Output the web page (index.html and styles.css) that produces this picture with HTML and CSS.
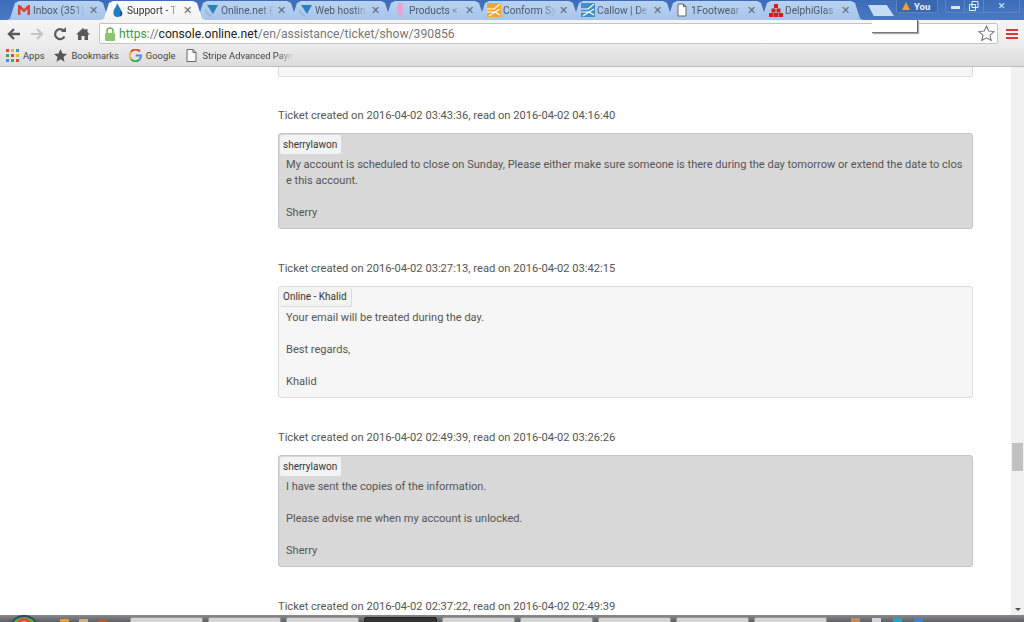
FILE: index.html
```html
<!DOCTYPE html>
<html lang="en">
  <head>
    <meta charset="UTF-8" />
    <title>Support - Ticket</title>
    <link rel="stylesheet" href="styles.css">
  </head>
  <body>
    <div class="tabstrip">
      <div class="tabs">
        <div class="tab">
          <svg class="fav" viewBox="0 0 14 14"><path d="M1 2h2l4 4 4-4h2v10h-2.500V6L7 9.500 3.500 6v6H1z" fill="#d9423a"/></svg>
          <span class="title">Inbox (351)</span><span class="close">✕</span>
        </div>
        <div class="tab active">
          <svg class="fav" viewBox="0 0 14 14"><path d="M6 0C8 4 11 7 10.500 10.500 10 13 8 14 6.500 14 3.500 14 2 11.500 2.500 8.500 3 5.500 5.500 4 6 0z" fill="#1b7fc4"/><path d="M9 7c2 1 3 3 2 5-.5 1-1.500 1.500-2.500 1.500C10 11 10 9 9 7z" fill="#0d4f86"/></svg>
          <span class="title">Support - T</span><span class="close">✕</span>
        </div>
        <div class="tab">
          <svg class="fav" viewBox="0 0 14 14"><path d="M2 2h11L8 11z" fill="#2d7fc0"/><path d="M0 6c1 4 3 6 6 7" fill="none" stroke="#8fb4d8" stroke-width="1.500"/></svg>
          <span class="title">Online.net F</span><span class="close">✕</span>
        </div>
        <div class="tab">
          <svg class="fav" viewBox="0 0 14 14"><path d="M2 2h11L8 11z" fill="#2d7fc0"/><path d="M0 6c1 4 3 6 6 7" fill="none" stroke="#8fb4d8" stroke-width="1.500"/></svg>
          <span class="title">Web hostin</span><span class="close">✕</span>
        </div>
        <div class="tab">
          <svg class="fav" viewBox="0 0 14 14"><path d="M5 0h4l1 6-2 8H6L4 6z" fill="#ee9fd2"/></svg>
          <span class="title">Products &lt;</span><span class="close">✕</span>
        </div>
        <div class="tab">
          <svg class="fav" viewBox="0 0 14 14"><rect width="14" height="14" fill="#f2a62e"/><path d="M0 6h7l6-5M0 9h8l5-3M2 13l6-4 5 3" fill="none" stroke="#fff" stroke-width="1.200"/></svg>
          <span class="title">Conform Sy</span><span class="close">✕</span>
        </div>
        <div class="tab">
          <svg class="fav" viewBox="0 0 14 14"><rect width="14" height="14" fill="#3f8fc6"/><path d="M0 6h7l6-5M0 9h8l5-3M2 13l6-4 5 3" fill="none" stroke="#fff" stroke-width="1.200"/></svg>
          <span class="title">Callow | De</span><span class="close">✕</span>
        </div>
        <div class="tab">
          <svg class="fav" viewBox="0 0 14 14"><path d="M3 1h5.500L11 3.500V13H3zM8.500 1v2.500H11" fill="#fdfdfd" stroke="#666"/></svg>
          <span class="title">1Footwear</span><span class="close">✕</span>
        </div>
        <div class="tab">
          <svg class="fav" viewBox="0 0 14 14"><path d="M5 1h4v4H5zM2.500 5.500h4v4h-4zM7.500 5.500h4v4h-4zM0 10h4.500v4H0zM5 10h4v4H5zM9.500 10H14v4H9.500z" fill="#dc1c1c"/></svg>
          <span class="title">DelphiGlas</span><span class="close">✕</span>
        </div>
        <div class="newtab"></div>
      </div>
      <div class="wincontrols">
        <div class="you"><span class="warn"></span>You</div>
        <div class="winbtns">
          <div class="winbtn"><span class="minbar"></span></div>
          <div class="winbtn"><svg width="10" height="10" viewBox="0 0 10 10"><path d="M3 .5h6v6H3zM.5 3.500h6v6h-6z" fill="none" stroke="#e8effa"/></svg></div>
          <div class="winbtn winclose">✕</div>
        </div>
      </div>
    </div>

    <div class="toolbar">
      <svg class="navicon" viewBox="0 0 14 14"><path d="M7 2 2 7l5 5M2 7h11" fill="none" stroke="#5a5a5a" stroke-width="2.400"/></svg>
      <svg class="navicon" viewBox="0 0 14 14"><path d="m7 2 5 5-5 5M12 7H1" fill="none" stroke="#c4c4c4" stroke-width="2.200"/></svg>
      <svg class="navicon" viewBox="0 0 14 14"><path d="M11.500 9.500A5 5 0 1 1 11 4" fill="none" stroke="#5a5a5a" stroke-width="2.200"/><path d="M8 5h5V0z" fill="#5a5a5a"/></svg>
      <svg class="navicon" viewBox="0 0 14 14"><path d="M7 1 0 7.500h2V13h3.500V9h3v4H12V7.500h2L11.500 5V2h-2v1.200z" fill="#5a5a5a"/></svg>
      <div class="omnibox">
        <svg class="lock" viewBox="0 0 12 14"><path d="M3 6V4a3 3 0 0 1 6 0v2" fill="none" stroke="#6fae52" stroke-width="1.500"/><rect x="1" y="6" width="10" height="8" rx="1" fill="#8cc56c"/></svg>
        <span class="url"><span class="scheme">https</span><span class="faint">://</span>console.online.net<span class="faint">/en/assistance/ticket/show/390856</span></span>
        <svg class="star" viewBox="0 0 16 16"><path d="m8 1 2.100 4.700 5 .5-3.800 3.400 1.100 5L8 12l-4.400 2.600 1.100-5L.9 6.200l5-.5z" fill="#fff" stroke="#777"/></svg>
      </div>
      <div class="menubtn"><span></span><span></span><span></span></div>
      <div class="tooltip"></div>
    </div>

    <div class="bookmarks">
      <div class="bookmark">
        <svg class="bmicon" viewBox="0 0 13 13"><path d="M0 0h3v3H0z" fill="#e0483c"/><path d="M5 0h3v3H5z" fill="#f2b233"/><path d="M10 0h3v3h-3z" fill="#4a8af0"/><path d="M0 5h3v3H0z" fill="#3fa85a"/><path d="M5 5h3v3H5z" fill="#e0483c"/><path d="M10 5h3v3h-3z" fill="#f2b233"/><path d="M0 10h3v3H0z" fill="#4a8af0"/><path d="M5 10h3v3H5z" fill="#3fa85a"/><path d="M10 10h3v3h-3z" fill="#e0483c"/></svg>
        Apps
      </div>
      <div class="bookmark">
        <svg class="bmicon" viewBox="0 0 13 13"><path d="m6.500 0 1.900 4.400 4.600.5-3.500 3.100 1 4.700-4-2.400-4 2.400 1-4.700L0 4.900l4.600-.5z" fill="#555"/></svg>
        Bookmarks
      </div>
      <div class="bookmark">
        <svg class="bmicon" viewBox="0 0 13 13"><path d="M11 2.500A5.500 5.500 0 0 0 2 3" fill="none" stroke="#e0483c" stroke-width="2"/><path d="M2 3a5.500 5.500 0 0 0 0 7" fill="none" stroke="#f2b233" stroke-width="2"/><path d="M2 10a5.500 5.500 0 0 0 8.500.5" fill="none" stroke="#3fa85a" stroke-width="2"/><path d="M10.500 10.500c1-1 1.500-2.200 1.500-4H6.700" fill="none" stroke="#4a8af0" stroke-width="2"/></svg>
        Google
      </div>
      <div class="bookmark">
        <svg class="bmicon" viewBox="0 0 13 13"><path d="M2 .5h6L11 3.500v9H2zM8 .5v3h3" fill="#f8f8f8" stroke="#666"/></svg>
        <span class="bmfade">Stripe Advanced Payn</span>
      </div>
    </div>

    <div class="page">
      <div class="main">
        <div class="msg msg-staff msg-cut"></div>

        <p class="meta">Ticket created on 2016-04-02 03:43:36, read on 2016-04-02 04:16:40</p>
        <div class="msg msg-user">
          <div class="author">sherrylawon</div>
          <p class="body">My account is scheduled to close on Sunday, Please either make sure someone is there during the day tomorrow or extend the date to close this account.

Sherry</p>
        </div>

        <p class="meta">Ticket created on 2016-04-02 03:27:13, read on 2016-04-02 03:42:15</p>
        <div class="msg msg-staff">
          <div class="author">Online - Khalid</div>
          <p class="body">Your email will be treated during the day.

Best regards,

Khalid</p>
        </div>

        <p class="meta">Ticket created on 2016-04-02 02:49:39, read on 2016-04-02 03:26:26</p>
        <div class="msg msg-user">
          <div class="author">sherrylawon</div>
          <p class="body">I have sent the copies of the information.

Please advise me when my account is unlocked.

Sherry</p>
        </div>

        <p class="meta">Ticket created on 2016-04-02 02:37:22, read on 2016-04-02 02:49:39</p>
      </div>
      <div class="scrollbar">
        <div class="thumb"></div>
        <div class="arrow"></div>
      </div>
    </div>

    <div class="taskbar">
      <div class="orb"></div>
      <div class="quick">
        <span class="q1"></span><span class="q2"></span><span class="q3"></span>
      </div>
      <div class="taskbtns">
        <div class="taskbtn"></div>
        <div class="taskbtn"></div>
        <div class="taskbtn"></div>
        <div class="taskbtn taskbtn-on"></div>
        <div class="taskbtn"></div>
        <div class="taskbtn"></div>
        <div class="taskbtn"></div>
        <div class="taskbtn"></div>
        <div class="taskbtn"></div>
      </div>
      <div class="tray">
        <span class="t1"></span><span class="t2"></span><span class="t3"></span><span class="t4"></span>
      </div>
    </div>
  </body>
</html>
```

FILE: styles.css
```css
* {
  box-sizing: border-box;
}
html,
body {
  height: 100%;
}
body {
  margin: 0;
  display: flex;
  flex-direction: column;
  height: 100vh;
  overflow: hidden;
  background: #fff;
  font-family: Roboto, sans-serif;
}

/* browser tab strip */
.tabstrip {
  height: 20px;
  flex: none;
  display: flex;
  background: linear-gradient(#3d6db8, #4a79c4);
}
.tabs {
  display: flex;
  align-items: flex-end;
  padding-left: 7px;
  flex: none;
}
.tab {
  width: 104px;
  height: 19px;
  margin-right: -10px;
  padding: 0 0 1px 10px;
  display: flex;
  align-items: center;
  background: linear-gradient(#b9d2f0, #a6c5ea);
  color: #4e5a68;
  font-size: 10.200px;
  clip-path: polygon(0 100%, 3px 92%, 8px 10%, 12px 0, calc(100% - 12px) 0, calc(100% - 8px) 10%, calc(100% - 3px) 92%, 100% 100%);
}
.tab.active {
  background: linear-gradient(#fbfbfb, #f3f3f3);
  color: #333;
  position: relative;
  z-index: 1;
}
.fav {
  width: 14px;
  height: 14px;
  flex: none;
}
.title {
  width: 53px;
  margin-left: 2px;
  white-space: nowrap;
  overflow: hidden;
  -webkit-mask-image: linear-gradient(to right, #000 75%, transparent);
  mask-image: linear-gradient(to right, #000 75%, transparent);
}
.close {
  margin-left: 3px;
  font-size: 11px;
  font-weight: 700;
  color: #5f6b78;
  font-family: "DejaVu Sans", sans-serif;
}
.newtab {
  width: 26px;
  height: 11px;
  margin: 0 0 4px 15px;
  background: #c6dbf5;
  clip-path: polygon(0 0, 72% 0, 100% 100%, 22% 100%);
}
.wincontrols {
  margin-left: auto;
  padding-right: 4px;
  display: flex;
  align-items: flex-start;
  gap: 7px;
}
.you {
  width: 42px;
  height: 13px;
  padding-left: 5px;
  display: flex;
  align-items: center;
  gap: 4px;
  color: #eaf1fb;
  font-size: 9.500px;
  font-weight: 700;
  background: #3a66ae;
  border: 1px solid #5b84c6;
  border-top: 0;
  border-radius: 0 0 2px 2px;
}
.warn {
  width: 0;
  height: 0;
  border-left: 4px solid transparent;
  border-right: 4px solid transparent;
  border-bottom: 8px solid #eda32c;
}
.winbtns {
  display: flex;
  height: 13px;
  border: 1px solid #5b84c6;
  border-top: 0;
  border-radius: 0 0 2px 2px;
}
.winbtn {
  width: 19px;
  display: flex;
  align-items: center;
  justify-content: center;
  border-right: 1px solid #5b84c6;
  color: #e8effa;
  font-size: 9px;
  font-family: "DejaVu Sans", sans-serif;
}
.winclose {
  width: 35px;
  border-right: 0;
}
.minbar {
  width: 9px;
  height: 3px;
  margin-top: 3px;
  background: #dbe6f6;
}

/* toolbar with the address field */
.toolbar {
  height: 25px;
  flex: none;
  padding: 3px 0 1px 7px;
  display: flex;
  align-items: center;
  background: linear-gradient(#f5f5f5, #ececec);
  position: relative;
}
.navicon {
  width: 14px;
  height: 14px;
  margin-right: 9px;
  flex: none;
}
.omnibox {
  width: 899px;
  height: 21px;
  padding: 0 2px 0 4px;
  display: flex;
  align-items: center;
  background: #fff;
  border: 1px solid #c4c4c4;
  border-radius: 2px;
}
.lock {
  width: 12px;
  height: 14px;
  flex: none;
}
.url {
  margin-left: 3px;
  font-size: 12.200px;
  color: #222;
  white-space: nowrap;
}
.scheme {
  color: #3f9b3a;
}
.faint {
  color: #777;
}
.star {
  width: 17px;
  height: 17px;
  margin-left: auto;
}
.menubtn {
  width: 12px;
  margin-left: 8px;
  display: flex;
  flex-direction: column;
  gap: 2px;
}
.menubtn span {
  height: 2px;
  background: #d8383a;
}
.tooltip {
  position: absolute;
  left: 872px;
  top: 0;
  width: 46px;
  height: 13px;
  background: #fff;
  border-right: 1px solid #666;
  border-bottom: 1px solid #777;
  box-shadow: 1px 1px 1px #aaa;
}

/* bookmarks bar */
.bookmarks {
  height: 22px;
  flex: none;
  padding: 0 0 0 6px;
  display: flex;
  align-items: center;
  gap: 10px;
  background: linear-gradient(#ececec, #dcdcdc);
  border-bottom: 1px solid #bdbdbd;
  color: #444;
  font-size: 9.400px;
}
.bookmark {
  display: flex;
  align-items: center;
  gap: 4px;
}
.bmicon {
  width: 13px;
  height: 13px;
}
.bmfade {
  width: 92px;
  white-space: nowrap;
  overflow: hidden;
  -webkit-mask-image: linear-gradient(to right, #000 82%, transparent);
  mask-image: linear-gradient(to right, #000 82%, transparent);
}

/* ticket page */
.page {
  flex: 1;
  min-height: 0;
  display: flex;
  overflow: hidden;
}
.main {
  flex: 1;
  padding: 0 38px 0 278px;
  font-size: 11.150px;
  line-height: 16px;
  color: #555;
}
.meta {
  margin: 32px 0 9px;
}
.msg {
  border: 1px solid;
  border-radius: 3px;
  padding: 1px 0 7px 1px;
}
.msg-user {
  background: #d8d8d8;
  border-color: #c6c6c6;
}
.msg-staff {
  background: #f6f6f6;
  border-color: #dcdcdc;
}
.msg-cut {
  height: 10px;
  margin-bottom: -1px;
  border-top: 0;
  border-radius: 0 0 3px 3px;
  padding: 0;
}
.author {
  display: inline-block;
  height: 19px;
  padding: 0 4px 0 3px;
  font-size: 10px;
  line-height: 19px;
  color: #333;
  background: #f3f3f3;
  border-radius: 2px;
}
.msg-staff .author {
  border: 1px solid #dcdcdc;
  border-width: 0 1px 1px 0;
  line-height: 18px;
}
.body {
  margin: 3px 0 0;
  padding: 0 9px 0 6px;
  font-size: 11.050px;
  white-space: pre-wrap;
  word-break: break-all;
}
.scrollbar {
  width: 13px;
  flex: none;
  padding-top: 376px;
  background: #f1f1f1;
  display: flex;
  flex-direction: column;
  align-items: center;
}
.thumb {
  width: 11px;
  height: 28px;
  background: #c1c1c1;
}
.arrow {
  width: 0;
  height: 0;
  margin: auto 0 4px;
  border-left: 3px solid transparent;
  border-right: 3px solid transparent;
  border-top: 3px solid #505050;
}

/* desktop taskbar, only its top edge is in the picture */
.taskbar {
  height: 7px;
  flex: none;
  display: flex;
  background: linear-gradient(#8a8a8a, #5a5f66);
  overflow: hidden;
}
.orb {
  width: 32px;
  height: 32px;
  margin: 0 0 0 8px;
  flex: none;
  border-radius: 50%;
  border: 2px solid #2d4a64;
  background: radial-gradient(circle at 50% 30%, #e8a23c 0 18%, #d8503a 19% 30%, #5aa84a 31% 48%, #b9d9ee 49%);
}
.quick {
  width: 90px;
  flex: none;
  padding: 4px 0 0 20px;
  display: flex;
  gap: 10px;
}
.quick span {
  width: 9px;
  height: 3px;
}
.q1 {
  background: #e0a040;
}
.q2 {
  background: #c9b080;
}
.q3 {
  background: #b05a40;
}
.taskbtns {
  display: flex;
  gap: 5px;
}
.taskbtn {
  width: 73px;
  height: 7px;
  margin-top: 2px;
  background: #d5d5d5;
  border: 1px solid #9a9a9a;
  border-radius: 2px 2px 0 0;
}
.taskbtn-on {
  background: #333;
  border-color: #222;
}
.tray {
  margin-left: 24px;
  padding-top: 3px;
  display: flex;
  gap: 12px;
}
.tray span {
  width: 9px;
  height: 4px;
}
.t1 {
  background: #d08a50;
}
.t2 {
  background: #d6d6d6;
}
.t3 {
  background: #2e9fc9;
}
.t4 {
  background: #4a7fd0;
}
```
